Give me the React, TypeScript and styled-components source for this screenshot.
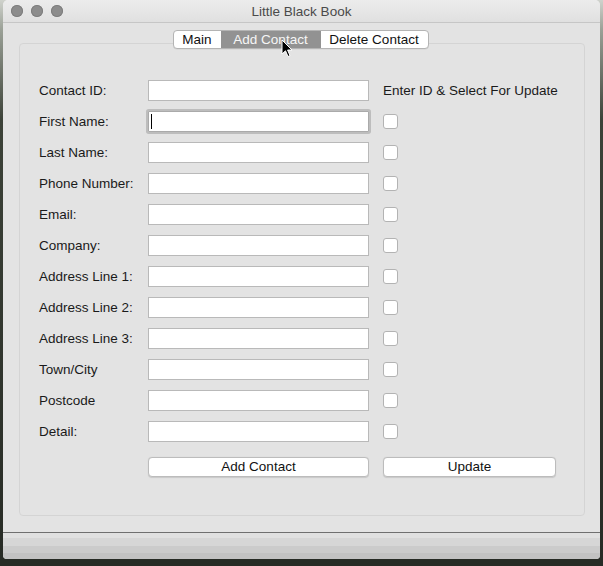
import React from "react";
import styled, { createGlobalStyle } from "styled-components";

const Global = createGlobalStyle`
  html, body { margin: 0; padding: 0; }
  body {
    width: 603px;
    height: 566px;
    overflow: hidden;
    background: linear-gradient(180deg, #cfd2cc 0px, #9aa096 30px, #3c4238 120px, #272b25 560px);
    font-family: "Liberation Sans", Arial, sans-serif;
  }
`;

const Window = styled.div`
  position: relative;
  margin-left: 3px;
  width: 597px;
  height: 559px;
  border-radius: 5px 5px 4px 4px;
  background: #e3e3e3;
  overflow: hidden;
  display: flex;
  flex-direction: column;
`;

const TitleBar = styled.div`
  height: 22px;
  flex: none;
  background: linear-gradient(180deg, #ececec, #e0e0e0);
  border-bottom: 1px solid #c6c6c6;
  display: flex;
  align-items: center;
  position: relative;
`;

const Lights = styled.div`
  display: flex;
  gap: 8px;
  padding-left: 8px;
`;

const Light = styled.span`
  width: 12px;
  height: 12px;
  border-radius: 50%;
  background: #8c8c8c;
  box-shadow: inset 0 0 0 1px #7e7e7e;
`;

const Title = styled.div`
  position: absolute;
  left: 0;
  right: 0;
  top: 0;
  height: 22px;
  line-height: 23px;
  text-align: center;
  font-size: 13.5px;
  color: #4a4a4a;
`;

const Content = styled.div`
  flex: 1;
  display: flex;
  flex-direction: column;
  padding: 7px 15px 0 16px;
`;

const TabRow = styled.div`
  display: flex;
  justify-content: center;
  position: relative;
  z-index: 1;
  padding-right: 3px;
`;

const Segmented = styled.div`
  display: flex;
  height: 17px;
  border: 1px solid #b4b4b4;
  border-radius: 4px;
  background: #ffffff;
  overflow: hidden;
  box-shadow: 0 0.5px 0 rgba(0,0,0,0.08);
`;

const Segment = styled.div<{ $w: number; $active?: boolean }>`
  width: ${(p) => p.$w}px;
  display: flex;
  align-items: center;
  justify-content: center;
  font-size: 13.5px;
  color: ${(p) => (p.$active ? "#f6f6f6" : "#111")};
  background: ${(p) => (p.$active ? "#929292" : "transparent")};
`;

const Group = styled.div`
  margin-top: -6px;
  height: 473px;
  border: 1px solid #d4d4d4;
  border-radius: 4px;
  padding: 36px 0 0 19px;
  box-sizing: border-box;
`;

const Form = styled.div`
  display: grid;
  grid-template-columns: 95px 221px 173px;
  column-gap: 14px;
  grid-auto-rows: 21px;
  row-gap: 10px;
  align-items: center;
`;

const Label = styled.div`
  font-size: 13.5px;
  color: #1a1a1a;
  white-space: nowrap;
`;

const Input = styled.div<{ $focused?: boolean }>`
  height: 21px;
  box-sizing: border-box;
  background: #fff;
  border: 1px solid #b9b9b9;
  position: relative;
  ${(p) =>
    p.$focused
      ? `box-shadow: 0 0 0 2px #bdbdbd; border-color: #aaaaaa; border-radius: 1px;`
      : ""}
`;

const Caret = styled.span`
  position: absolute;
  left: 2px;
  top: 2px;
  width: 1px;
  height: 15px;
  background: #000;
`;

const Check = styled.span`
  width: 13px;
  height: 13px;
  border: 1px solid #b3b3b3;
  border-radius: 3px;
  background: #fff;
  display: block;
`;

const Hint = styled.div`
  font-size: 13.5px;
  color: #1a1a1a;
  white-space: nowrap;
`;

const Button = styled.div`
  height: 20px;
  box-sizing: border-box;
  border: 1px solid #bcbcbc;
  border-radius: 4px;
  background: #fff;
  display: flex;
  align-items: center;
  justify-content: center;
  font-size: 13.5px;
  color: #111;
  box-shadow: 0 0.5px 1px rgba(0,0,0,0.12);
`;

const ButtonRow = styled.div`
  display: contents;
`;

const Spacer = styled.div``;

const Footer = styled.div`
  flex: none;
  border-top: 1px solid #6f6f6f;
  display: flex;
  flex-direction: column;
`;

const Band = styled.div<{ $h: number; $c: string }>`
  height: ${(p) => p.$h}px;
  background: ${(p) => p.$c};
`;

const Cursor = styled.svg`
  position: absolute;
  left: 278px;
  top: 39px;
  z-index: 5;
`;

const fields = [
  "First Name:",
  "Last Name:",
  "Phone Number:",
  "Email:",
  "Company:",
  "Address Line 1:",
  "Address Line 2:",
  "Address Line 3:",
  "Town/City",
  "Postcode",
  "Detail:",
];

export default function App() {
  return (
    <>
      <Global />
      <Window>
        <TitleBar>
          <Lights>
            <Light />
            <Light />
            <Light />
          </Lights>
          <Title>Little Black Book</Title>
        </TitleBar>
        <Content>
          <TabRow>
            <Segmented>
              <Segment $w={47}>Main</Segment>
              <Segment $w={100} $active>
                Add Contact
              </Segment>
              <Segment $w={107}>Delete Contact</Segment>
            </Segmented>
          </TabRow>
          <Group>
            <Form>
              <Label>Contact ID:</Label>
              <Input />
              <Hint>Enter ID &amp; Select For Update</Hint>
              {fields.map((f, i) => (
                <React.Fragment key={f}>
                  <Label>{f}</Label>
                  <Input $focused={i === 0}>{i === 0 && <Caret />}</Input>
                  <Check />
                </React.Fragment>
              ))}
            </Form>
            <Form style={{ marginTop: 14 }}>
              <Spacer />
              <ButtonRow>
                <Button>Add Contact</Button>
                <Button>Update</Button>
              </ButtonRow>
            </Form>
          </Group>
        </Content>
        <Footer>
          <Band $h={5} $c="#e0e0e0" />
          <Band $h={8} $c="#d6d6d6" />
          <Band $h={7} $c="#cbcbcb" />
          <Band $h={6} $c="#c2c2c2" />
        </Footer>
        <Cursor width="12" height="19" viewBox="0 0 12 19">
          <path
            d="M1 1 L1 15 L4.5 11.8 L7 17.5 L9 16.6 L6.6 11 L11 11 Z"
            fill="#000"
            stroke="#fff"
            strokeWidth="1"
            strokeLinejoin="round"
          />
        </Cursor>
      </Window>
    </>
  );
}
